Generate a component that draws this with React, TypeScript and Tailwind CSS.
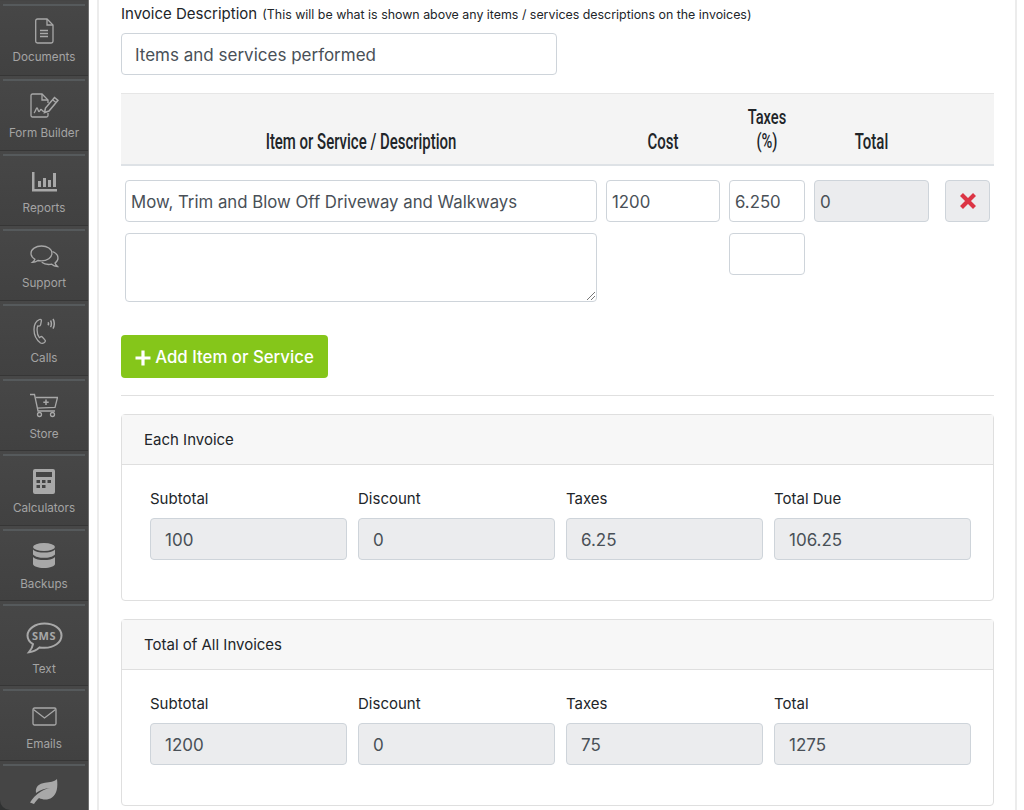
import React from "react";

const ic = "stroke-[#a8a8a8] fill-none";

const Doc = () => (
  <svg width="20" height="26" viewBox="0 0 20 26" className={ic} strokeWidth="1.3">
    <path d="M3.500 1h9.500l6 6v16.200a1.800 1.800 0 0 1-1.800 1.800H3.500a1.800 1.800 0 0 1-1.800-1.800V2.800A1.800 1.800 0 0 1 3.500 1z" />
    <path d="M13 1v6h6" />
    <path d="M6 12.500h8M6 15.500h8M6 18.500h8" strokeWidth="1.500" />
  </svg>
);
const FormB = () => (
  <svg width="29" height="25" viewBox="0 0 29 25" className={ic} strokeWidth="1.3">
    <path d="M18 20v2.500a1.500 1.500 0 0 1-1.500 1.500H2.500A1.500 1.500 0 0 1 1 22.500v-20A1.500 1.500 0 0 1 2.500 1h9.500l6 6v3" />
    <path d="M12 1v6h6" />
    <path d="M4 20c1.500-1 2-5 3-5s1 3.500 2 3.500 1-2 2-2 1 2 3 2" />
    <path d="M14.500 19.500l1-4.500L24.500 4.500l3.500 2.800-9 10.700z" strokeWidth="1.500" />
    <path d="M22.500 6.800l3.500 2.800" />
  </svg>
);
const Rep = () => (
  <svg width="25" height="20" viewBox="0 0 25 20" fill="#a8a8a8">
    <rect x="0" y="0" width="2.500" height="19" />
    <rect x="0" y="17" width="25" height="2.500" />
    <rect x="6" y="9" width="3" height="6" />
    <rect x="11" y="6" width="3" height="9" />
    <rect x="16" y="8" width="3" height="7" />
    <rect x="21" y="1" width="3" height="14" />
  </svg>
);
const Sup = () => (
  <svg width="29" height="23" viewBox="0 0 29 23" className={ic} strokeWidth="1.3">
    <path d="M11.500 1C5.700 1 1 4.200 1 8.300c0 2.400 1.500 4.500 3.900 5.900-.4 1.200-1.300 2.300-2.400 3.100 2 0 3.900-.7 5.400-1.800 1.100.3 2.300.4 3.500.4 5.800 0 10.500-3.400 10.500-7.600S17.300 1 11.500 1z" />
    <path d="M22.500 6.500c3.300 1.300 5.500 3.700 5.500 6.500 0 2-1.100 3.800-3 5 .3 1.100 1.200 2.300 2.500 3.500-2.500-.1-4.500-1-5.800-2.300-1 .2-2 .3-3 .3-2.800 0-5.300-.9-7-2.200" />
  </svg>
);
const Call = () => (
  <svg width="22" height="26" viewBox="0 0 22 26" className={ic} strokeWidth="1.3">
    <path d="M6.500 1.500C3 3 1 6.500 1 11.500c0 5.500 2.500 10.500 6.500 13.500 1.800.7 3.500.1 4.500-1.200.5-.8.300-1.600-.3-2.200l-2.400-2.600c-.6-.6-1.400-.5-2 0l-.9.700C4.700 17.500 4 14.500 4.100 11.500c0-1.300.2-2.500.6-3.500l1.300.1c.8 0 1.400-.5 1.600-1.300L8.400 3c.2-1.200-.8-2-1.900-1.500z" />
    <path d="M15 4.200c.6.8.6 2.300 0 3.100" strokeWidth="1.500" />
    <path d="M17.500 2.500c1.200 1.600 1.200 5 0 6.600" strokeWidth="1.500" />
    <path d="M20 1c1.700 2.500 1.700 7.100 0 9.600" strokeWidth="1.500" />
  </svg>
);
const Cart = () => (
  <svg width="28" height="25" viewBox="0 0 28 25" className={ic} strokeWidth="1.3">
    <path d="M0 1.500h4.500l3.500 16.500h17" />
    <path d="M5.500 4.500H27.500l-2.500 9.800-18 .9" />
    <circle cx="9.500" cy="21.500" r="2" />
    <circle cx="22.500" cy="21.500" r="2" />
    <path d="M16 6.500v5.500M13.300 9.200h5.400" strokeWidth="1.500" />
  </svg>
);
const Calc = () => (
  <svg width="22" height="25" viewBox="0 0 22 25">
    <path fillRule="evenodd" fill="#a8a8a8" d="M2 0h18a2 2 0 0 1 2 2v21a2 2 0 0 1-2 2H2a2 2 0 0 1-2-2V2a2 2 0 0 1 2-2zM3 3v5h16V3zM3.500 11v3h3.500v-3zM9 11v3h3.500v-3zM14.500 11v3H18v-3zM3.500 16v3h3.500v-3zM9 16v3h3.500v-3z" />
  </svg>
);
const Db = () => (
  <svg width="22" height="25" viewBox="0 0 22 25" fill="#a8a8a8">
    <ellipse cx="11" cy="4" rx="11" ry="4" />
    <path d="M0 6.500C2 9 7 9.500 11 9.500s9-.5 11-3v5C20 14 15 14.800 11 14.800S2 14 0 11.500z" />
    <path d="M0 14C2 16.500 7 17 11 17s9-.5 11-3v7c0 2.200-5 4-11 4S0 23.200 0 21z" />
  </svg>
);
const Sms = () => (
  <div className="relative w-[37px] h-[32px]">
    <svg width="37" height="32" viewBox="0 0 37 32" className={ic} strokeWidth="2">
      <path d="M18.500 1.500C9 1.500 1.500 7 1.500 13.500c0 3.500 2 6.500 5.500 8.700-.3 2.500-1.500 5-4 8 4-.5 8-2.400 10.500-4.800 1.700.3 3.400.4 5 .4 9.500 0 17-5.300 17-12.300S28 1.500 18.500 1.500z" />
    </svg>
    <span className="absolute left-0 right-0 top-[6px] text-center text-[11px] leading-[16px] font-bold tracking-[0.5px] text-[#a8a8a8] font-['Open_Sans',sans-serif]">SMS</span>
  </div>
);
const Mail = () => (
  <svg width="25" height="19" viewBox="0 0 25 19" className={ic} strokeWidth="1.3">
    <rect x="1" y="1" width="23" height="17" rx="1.500" />
    <path d="M1.500 2.500l11 8.500 11-8.500" />
  </svg>
);
const Leaf = () => (
  <svg width="28" height="25" viewBox="0 0 28 25" fill="#a8a8a8">
    <path d="M27 0c1 8 0 15-5 18.500-4 2.700-9 2.500-13 .5-1.700 1.500-3.500 3.500-5 6L0 23.500c2-3.500 6-8 11-11 3-1.800 6-3 9-3.500-5 .3-10 2-14 5C5 8 9 4.500 15 3.800 20 3.200 24 3 27 0z" />
  </svg>
);

const nav: { label: string; icon: React.ReactNode; h: string; top: string; mb: string }[] = [
  { label: "Documents", icon: <Doc />, h: "h-[75px]", top: "pt-[12px]", mb: "mb-[10px]" },
  { label: "Form Builder", icon: <FormB />, h: "h-[75px]", top: "pt-[12px]", mb: "mb-[9px]" },
  { label: "Reports", icon: <Rep />, h: "h-[75px]", top: "pt-[16px]", mb: "mb-[9px]" },
  { label: "Support", icon: <Sup />, h: "h-[75px]", top: "pt-[14px]", mb: "mb-[9px]" },
  { label: "Calls", icon: <Call />, h: "h-[75px]", top: "pt-[12px]", mb: "mb-[9px]" },
  { label: "Store", icon: <Cart />, h: "h-[75px]", top: "pt-[12px]", mb: "mb-[8px]" },
  { label: "Calculators", icon: <Calc />, h: "h-[75px]", top: "pt-[13px]", mb: "mb-[9px]" },
  { label: "Backups", icon: <Db />, h: "h-[75px]", top: "pt-[12px]", mb: "mb-[8px]" },
  { label: "Text", icon: <Sms />, h: "h-[85px]", top: "pt-[16px]", mb: "mb-[8px]" },
  { label: "Emails", icon: <Mail />, h: "h-[75px]", top: "pt-[16px]", mb: "mb-[8px]" },
];

const inputBase =
  "h-[42px] rounded border border-[#ced4da] flex items-center text-[#495057] overflow-hidden";

const Field = ({ v, className = "" }: { v?: string; className?: string }) => (
  <div className={`${inputBase} bg-white text-[16.800px] px-[5px] pt-[4px] ${className}`}>{v}</div>
);
const Ro = ({ v, className = "" }: { v?: string; className?: string }) => (
  <div className={`${inputBase} bg-[#ebecee] text-[17px] pt-[4px] ${className}`}>{v}</div>
);

const Summary = ({ title, totalLabel, vals }: { title: string; totalLabel: string; vals: string[] }) => {
  const labels = ["Subtotal", "Discount", "Taxes", totalLabel];
  return (
    <div className="h-[187px] rounded border border-[#dfdfdf] bg-white">
      <div className="h-[50px] bg-[#f7f7f7] border-b border-[#dfdfdf] flex items-center px-[22px] pt-[2px] text-[15px] text-[#212529]">
        {title}
      </div>
      <div className="grid grid-cols-4 gap-x-[11px] pl-[28px] pr-[22px] pt-[25px]">
        {labels.map((l, i) => (
          <div key={l}>
            <div className="text-[15px] leading-[18px] text-[#212529] mb-[10px]">{l}</div>
            <Ro v={vals[i]} className="px-[14px]" />
          </div>
        ))}
      </div>
    </div>
  );
};

const gridCols = "grid grid-cols-[472px_114px_76px_115px_61px] gap-x-[9px]";
const head =
  "font-['Roboto',sans-serif] text-[22px] leading-[22px] font-medium text-[#212529] text-center scale-x-[0.68] whitespace-nowrap";
const headTax =
  "font-['Roboto',sans-serif] text-[20.400px] leading-[24px] font-medium text-[#212529] text-center scale-x-[0.72] whitespace-nowrap";

export default function App() {
  return (
    <div className="w-[1024px] h-[810px] overflow-hidden bg-white flex font-['Inter','Liberation_Sans',sans-serif]">
      <aside className="w-[89px] h-[810px] shrink-0 overflow-hidden bg-[#303232] border-r border-[#707070]">
        <div className="h-full bg-[#454545] rounded-bl-[10px] pt-[1px]">
          {nav.map((n) => (
            <div
              key={n.label}
              className={`${n.h} flex flex-col border-b border-b-[#363636] bg-gradient-to-b from-[#474747] to-[#414141]`}
            >
              <div className="mt-[3px] mx-[3px] h-[2px] shrink-0 bg-[#565a5c]" />
              <div className={`${n.top} flex-1 flex items-start justify-center`}>{n.icon}</div>
              <div className={`text-[11.700px] leading-[16px] text-[#a4a4a4] ${n.mb} text-center whitespace-nowrap`}>{n.label}</div>
            </div>
          ))}
          <div className="mt-[3px] mx-[3px] h-[2px] bg-[#565a5c]" />
          <div className="flex justify-center pt-[13px]"><Leaf /></div>
        </div>
      </aside>

      <div className="w-[8px] shrink-0 bg-white" />
      <main className="w-[920px] h-[810px] shrink-0 border-l-2 border-r-2 border-[#ececec] pl-[22px] pr-[22px]">
        <div className="w-[873px]">
          <div className="pt-[4px] h-[33px] text-[15px] leading-[20px] text-[#212529] whitespace-nowrap">
            Invoice Description <span className="text-[12.400px] ml-[1px]">(This will be what is shown above any items / services descriptions on the invoices)</span>
          </div>
          <div className={`${inputBase} w-[436px] bg-white text-[17px] px-[13px] pt-[3px]`}>Items and services performed</div>

          <div className="mt-[18px] h-[73px] bg-[#f4f4f4] border-t border-[#e6e6e6] border-b-2 border-b-[#dee2e6] px-[4px]">
            <div className={`${gridCols} h-full items-end pb-[11px]`}>
              <div className={head}>Item or Service / Description</div>
              <div className={head}>Cost</div>
              <div className={headTax}>Taxes<br />(%)</div>
              <div className={head}>Total</div>
              <div />
            </div>
          </div>

          <div className={`${gridCols} px-[4px] mt-[14px]`}>
            <Field v="Mow, Trim and Blow Off Driveway and Walkways" />
            <Field v="1200" />
            <Field v="6.250" />
            <Ro v="0" className="px-[5px]" />
            <div className="h-[42px] ml-[7px] w-[45px] rounded border border-[#ced4da] bg-[#ebecee] flex items-center justify-center">
              <svg width="18" height="18" viewBox="0 0 18 18" fill="none" stroke="#dc3545" strokeWidth="4.200">
                <path d="M2.500 2.500l13 13M15.500 2.500l-13 13" />
              </svg>
            </div>
          </div>
          <div className={`${gridCols} px-[4px] mt-[11px]`}>
            <div className="h-[69px] rounded border border-[#ced4da] bg-white relative">
              <svg width="9" height="9" viewBox="0 0 9 9" className="absolute right-[1px] bottom-[1px]" stroke="#777" strokeWidth="1">
                <path d="M1 9l8-8M5 9l4-4" />
              </svg>
            </div>
            <div />
            <Field />
          </div>

          <button className="mt-[33px] w-[207px] h-[43px] rounded bg-[#85c61a] text-white text-[16.800px] flex items-center justify-center gap-[4px] font-medium pt-[2px]">
            <svg width="16" height="16" viewBox="0 0 16 16" stroke="#fff" strokeWidth="3.200"><path d="M8 0.500v15M0.500 8h15" /></svg>
            Add Item or Service
          </button>

          <div className="mt-[17px] border-t border-[#e0e0e0]" />

          <div className="mt-[18px]">
            <Summary title="Each Invoice" totalLabel="Total Due" vals={["100", "0", "6.25", "106.25"]} />
          </div>
          <div className="mt-[18px]">
            <Summary title="Total of All Invoices" totalLabel="Total" vals={["1200", "0", "75", "1275"]} />
          </div>
        </div>
      </main>
    </div>
  );
}
